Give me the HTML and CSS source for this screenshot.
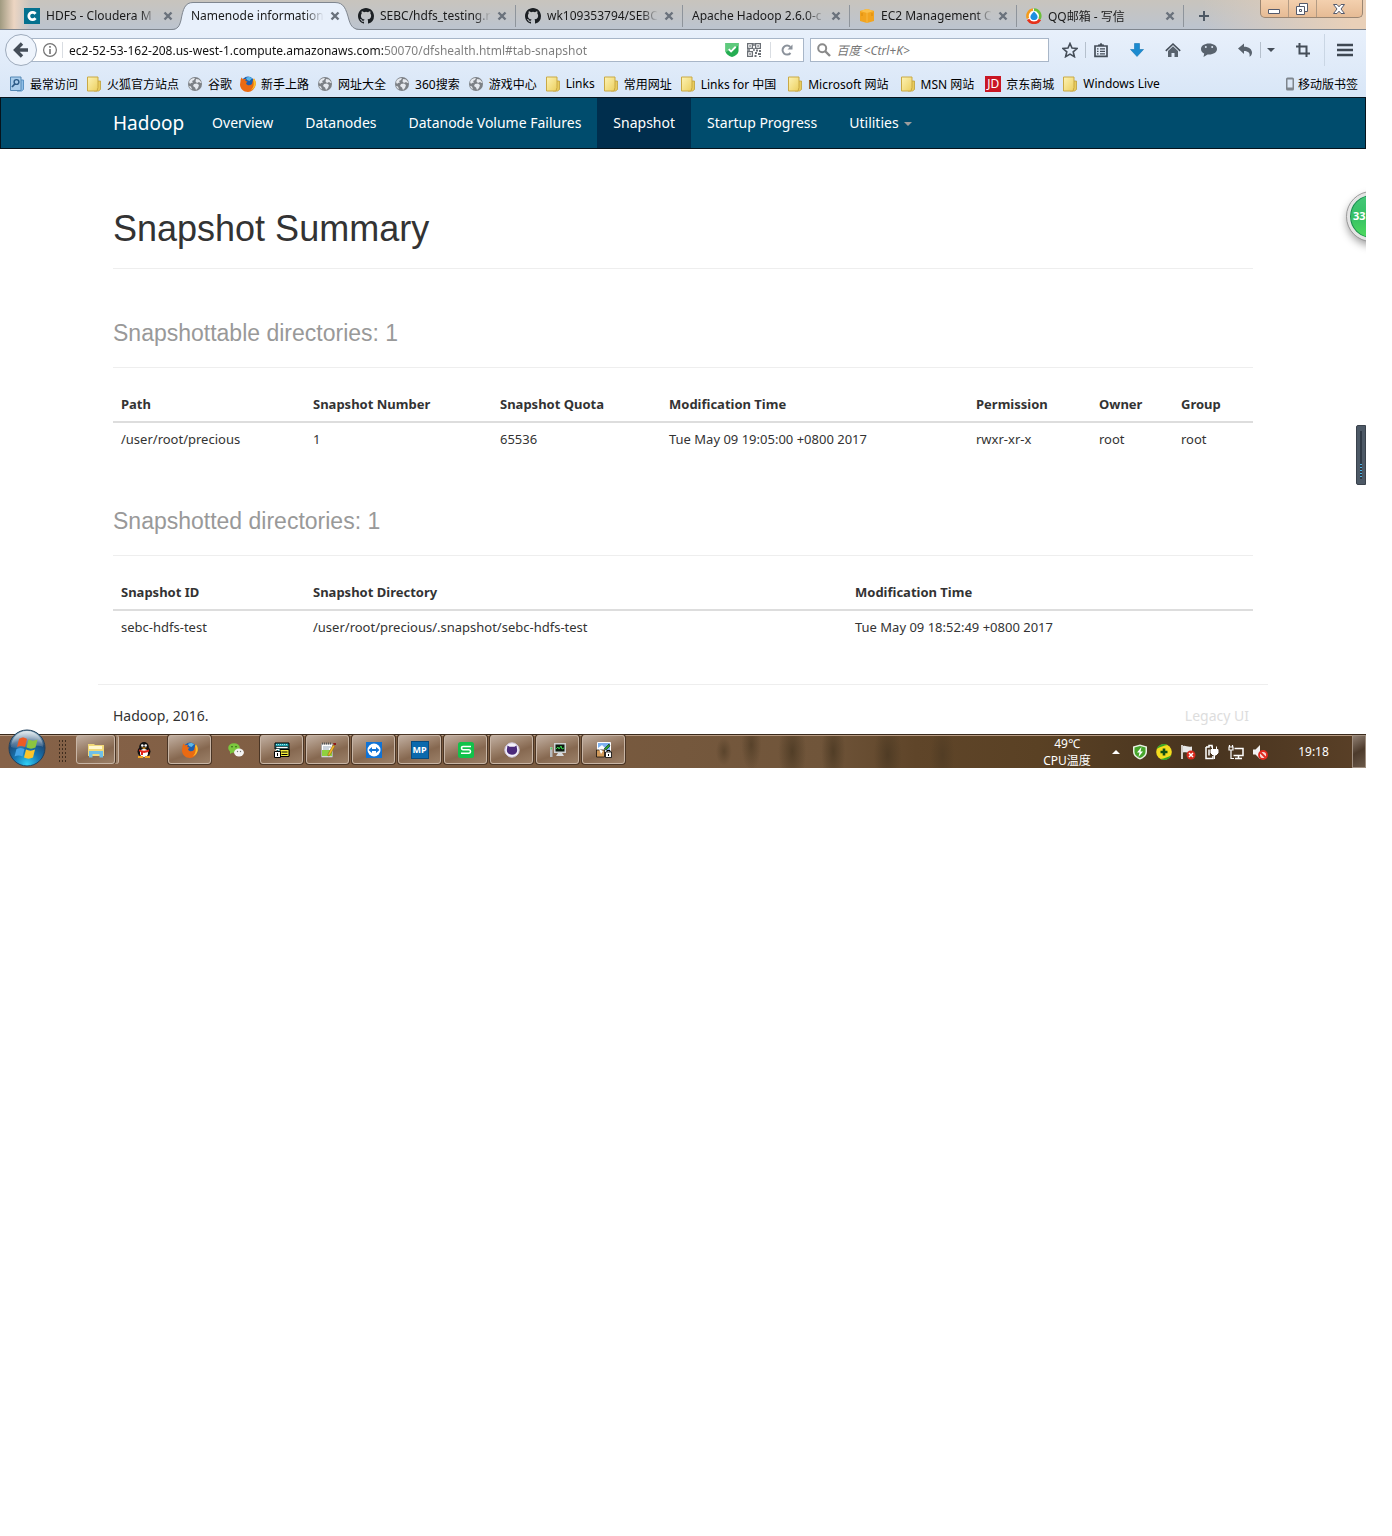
FILE: index.html
```html
<!DOCTYPE html>
<html lang="en">
<head>
<meta charset="utf-8">
<title>Namenode information</title>
<link rel="stylesheet" href="styles.css">
</head>
<body>
<svg class="defs" aria-hidden="true">
  <defs>
    <linearGradient id="g-folder" x1="0" y1="0" x2="1" y2="1"><stop offset="0" stop-color="#fdf3b5"/><stop offset="1" stop-color="#eccf5e"/></linearGradient>
    <radialGradient id="g-orb" cx=".5" cy=".95" r=".9"><stop offset="0" stop-color="#2fd0f5"/><stop offset=".4" stop-color="#1677b4"/><stop offset=".75" stop-color="#1c4a78"/><stop offset="1" stop-color="#87a9bd"/></radialGradient>
    <linearGradient id="g-gloss" x1="0" y1="0" x2="0" y2="1"><stop offset="0" stop-color="#fff" stop-opacity=".75"/><stop offset="1" stop-color="#fff" stop-opacity=".1"/></linearGradient>
  </defs>
  <symbol id="close" viewBox="0 0 10 10"><path d="M1.500 1.500l7 7M8.500 1.500l-7 7" stroke="#6a727c" stroke-width="2.400"/></symbol>
  <symbol id="folder" viewBox="0 0 16 16"><path d="M10 5h4.500v8.500l-2 1.500H8z" fill="#e8cb5c" stroke="#bf9f38" stroke-width=".8"/><path d="M1.500 1h10.500v10.500l-1 3.500H1.500z" fill="url(#g-folder)" stroke="#c9a945"/></symbol>
  <symbol id="globe" viewBox="0 0 16 16"><circle cx="8" cy="8" r="7" fill="#7d8186"/><path d="M2 6c1-3 3-4 6-4l-1 2-2 1 1 1.500-2 .5-1 1zM9 3l3 .5 2.500 3-1 .5L12 6l-2 1-1.500-1.500zM7 8l3-.5 2 1.500-1 3-2 2-1-2.500-2-1.500zM2 10l2 .5 1 3c-1.500-.7-2.500-2-3-3.500z" fill="#e6e9ee"/></symbol>
  <symbol id="github" viewBox="0 0 16 16"><path fill="#1b1f23" d="M8 0C3.580 0 0 3.580 0 8c0 3.540 2.290 6.530 5.470 7.590.4.070.55-.17.55-.38 0-.19-.01-.82-.01-1.490-2.010.37-2.530-.49-2.690-.94-.09-.23-.48-.94-.82-1.130-.28-.15-.68-.52-.01-.53.63-.01 1.080.58 1.230.82.72 1.210 1.870.87 2.330.66.070-.52.28-.87.51-1.070-1.780-.2-3.640-.89-3.640-3.950 0-.87.31-1.590.82-2.150-.08-.2-.36-1.020.08-2.120 0 0 .67-.21 2.200.82a7.400 7.400 0 0 1 4 0c1.530-1.040 2.200-.82 2.200-.82.44 1.100.16 1.920.08 2.120.51.56.82 1.270.82 2.150 0 3.070-1.870 3.750-3.650 3.950.29.25.54.73.54 1.480 0 1.070-.01 1.930-.01 2.200 0 .21.15.46.55.38A8.010 8.010 0 0 0 16 8c0-4.420-3.580-8-8-8z"/></symbol>
  <symbol id="firefox" viewBox="0 0 16 16"><circle cx="8" cy="7" r="6.500" fill="#1f5fae"/><path d="M6 2c2-1.500 5-1 6 .5L9.500 5 7 4z" fill="#5bb7e8"/><path d="M.5 5c0-1.500.5-2.500 1.200-3.500L3 3.500C4 3 5 3 6 3.300L5.200 5l2.300.5-1.500 1.800c1 2.500 4 2.700 6 .7L13 4l1-1.500c1.500 2 2 4 1.700 6C15 13 11.500 16 8 16 3.500 16 0 12.500 0 8.500z" fill="#ea6a12"/><path d="M14 2.500c1.500 2 2 4 1.700 6-.6 3-2.700 5-5 6C13.500 12 14.500 8 13 4z" fill="#fbc02a"/></symbol>
</svg>

<div class="desktop">
  <header class="browser">
    <div class="tabstrip">
      <div class="tab"><svg class="i16" viewBox="0 0 16 16"><path fill="#04718f" d="M0 0h16v16H0z"/><path d="M11.500 5.800A3.700 3.700 0 1 0 11.500 10.200" fill="none" stroke="#fff" stroke-width="2.800"/></svg><span class="tab-title">HDFS - Cloudera M</span><button class="tab-close" aria-label="Close tab"><svg viewBox="0 0 10 10"><use href="#close"/></svg></button></div>
      <div class="tab active"><svg class="tab-shape" viewBox="0 0 190 30" preserveAspectRatio="none"><path d="M0 30C7 30 8.500 26 10 20 12 9 14 2.500 22 2.500H164C173 2.500 175 9 178 20 180 27 183 30 190 30z" fill="#e8f0fb"/><path d="M0 29.500C7 29.500 8.500 26 10 20 12 9 14 2.500 22 2.500H164C173 2.500 175 9 178 20 180 27 183 29.500 190 29.500" fill="none" stroke="#7f868f"/></svg><span class="tab-title">Namenode information</span><button class="tab-close" aria-label="Close tab"><svg viewBox="0 0 10 10"><use href="#close"/></svg></button></div>
      <div class="tab sep"><svg class="i16"><use href="#github"/></svg><span class="tab-title">SEBC/hdfs_testing.r</span><button class="tab-close" aria-label="Close tab"><svg viewBox="0 0 10 10"><use href="#close"/></svg></button></div>
      <div class="tab sep"><svg class="i16"><use href="#github"/></svg><span class="tab-title">wk109353794/SEBC</span><button class="tab-close" aria-label="Close tab"><svg viewBox="0 0 10 10"><use href="#close"/></svg></button></div>
      <div class="tab sep"><span class="tab-title">Apache Hadoop 2.6.0-c</span><button class="tab-close" aria-label="Close tab"><svg viewBox="0 0 10 10"><use href="#close"/></svg></button></div>
      <div class="tab sep"><svg class="i16" viewBox="0 0 16 16"><path d="M1 3l7-2 7 2v10l-7 2-7-2z" fill="#f2a41f"/><path d="M1 3l7 2 7-2-7-2z" fill="#fbc04a"/><path d="M8 5v10" stroke="#f7b845"/><path d="M3 5v3M13 5v3" stroke="#d98a0c"/></svg><span class="tab-title">EC2 Management C</span><button class="tab-close" aria-label="Close tab"><svg viewBox="0 0 10 10"><use href="#close"/></svg></button></div>
      <div class="tab sep"><svg class="i16" viewBox="0 0 16 16"><circle cx="8" cy="8" r="7" fill="#fff"/><path d="M8 1.500A6.500 6.500 0 0 1 13.500 11" fill="none" stroke="#6cbf3a" stroke-width="2.600"/><path d="M2 10.500A6.500 6.500 0 0 1 7 1.500" fill="none" stroke="#f49b1b" stroke-width="2.600"/><path d="M2 11.500A7 7 0 0 0 14 11.500" fill="none" stroke="#e5321c" stroke-width="2.600"/><path d="M8 3.500c2.500 2.500 4 4 3.500 6.200-.4 1.500-1.800 2.300-3.500 2.300s-3.100-.8-3.500-2.300C4 7.500 5.500 6 8 3.500z" fill="#1e8fe0"/></svg><span class="tab-title">QQ邮箱 - 写信</span><button class="tab-close" aria-label="Close tab"><svg viewBox="0 0 10 10"><use href="#close"/></svg></button></div>
      <button class="new-tab" aria-label="New tab"><svg viewBox="0 0 12 12"><path d="M6 1v10M1 6h10" stroke="#4e5964" stroke-width="2"/></svg></button>
      <div class="win-controls">
        <button aria-label="Minimize"><svg width="14" height="12" viewBox="0 0 14 12"><path d="M1.500 6.500h11v4h-11z" fill="#fff" stroke="#545a6c"/></svg></button>
        <button aria-label="Restore"><svg width="14" height="12" viewBox="0 0 14 12"><path d="M4.500.5h8v8h-8z" fill="#fff" stroke="#545a6c"/><path d="M1.500 3.500h8v8h-8z" fill="#fff" stroke="#545a6c"/><path d="M4.500 6.500h2v2h-2z" fill="none" stroke="#545a6c"/></svg></button>
        <button aria-label="Close window"><svg width="14" height="12" viewBox="0 0 14 12"><path d="M1.500 1.500h3.500l2 2.300 2-2.300h3.500L9 6l3.500 4.500H9L7 8.200 5 10.500H1.500L5 6z" fill="#fff" stroke="#545a6c"/></svg></button>
      </div>
    </div>

    <div class="toolbar">
      <button class="back" aria-label="Back"><svg viewBox="0 0 16 16"><path d="M9 1.500L2.500 8 9 14.500M3 8h12" fill="none" stroke="#454e59" stroke-width="3.400"/></svg></button>
      <div class="urlbar">
        <svg class="i14" viewBox="0 0 14 14"><circle cx="7" cy="7" r="6.400" fill="none" stroke="#737373" stroke-width="1.200"/><path d="M7 6v5M7 3v1.800" stroke="#737373" stroke-width="1.600"/></svg>
        <span class="url-sep"></span>
        <input class="url" type="text" aria-label="Address" value="ec2-52-53-162-208.us-west-1.compute.amazonaws.com:50070/dfshealth.html#tab-snapshot">
        <svg class="i14 shield" viewBox="0 0 14 15"><path d="M0 0h14v8c0 3.500-3 5.500-7 7-4-1.500-7-3.500-7-7z" fill="#24ad52"/><path d="M0 0h14v3L0 10z" fill="#5fca7d"/><path d="M3.500 6.500L6 9l5-5" fill="none" stroke="#fff" stroke-width="2"/></svg>
        <svg class="i14 qr" viewBox="0 0 14 14"><path d="M.6.6h4.800v4.800H.6zM8.600.6h4.800v4.800H8.600zM.6 8.600h4.800v4.800H.6z" fill="none" stroke="#6a6f75" stroke-width="1.300"/><path d="M2.300 2.300h1.500v1.500H2.300zM10.300 2.300h1.500v1.500h-1.500zM2.300 10.300h1.500v1.500H2.300zM6.200 0h1.500v3H6.200zM6.200 5h1.500v3H6.200zM0 6.200h3v1.500H0zM9 6.500h2v2H9zM12 7h2v2h-2zM8 9h2v2H8zM11 10h3v2h-3zM7.500 12h2v2h-2zM12 13h2v1h-2z" fill="#6a6f75"/></svg>
        <span class="url-sep"></span>
        <button class="reload" aria-label="Reload"><svg viewBox="0 0 12 12"><path d="M9.500 9A4.500 4.500 0 1 1 9.300 3" fill="none" stroke="#8b929b" stroke-width="2"/><path d="M11.500.5v5h-5z" fill="#8b929b"/></svg></button>
      </div>
      <div class="searchbar">
        <svg class="i14" viewBox="0 0 14 14"><circle cx="5.200" cy="5.200" r="4" fill="none" stroke="#8a8a8a" stroke-width="2"/><path d="M8 8l5 5" stroke="#8a8a8a" stroke-width="2.400"/></svg>
        <input class="search" type="search" aria-label="Search" placeholder="百度 &lt;Ctrl+K&gt;">
      </div>
      <div class="tools">
        <button aria-label="Bookmark"><svg viewBox="0 0 16 16"><path d="M8 1.500l2 4.600 5 .4-3.800 3.300 1.200 4.900L8 12.100l-4.400 2.600 1.200-4.900L1 6.500l5-.4z" fill="none" stroke="#454e59" stroke-width="1.600"/></svg></button>
        <span class="tool-sep"></span>
        <button aria-label="Bookmarks menu"><svg viewBox="0 0 16 16"><path d="M2 4h12v10.300H2z" fill="none" stroke="#454e59" stroke-width="1.700"/><path d="M5 4V2.500h1.500L8 .8l1.500 1.700H11V4z" fill="#454e59"/><path d="M4 6.800h1.500M7 6.800h5M4 9.300h1.500M7 9.300h5M4 11.800h1.500M7 11.800h5" stroke="#454e59" stroke-width="1.200"/></svg></button>
        <button aria-label="Downloads"><svg viewBox="0 0 16 16"><path d="M5.500 1.500h5v6h4L8 14.500 1.500 7.500h4z" fill="#1b8bd0" stroke="#1273b2" stroke-width=".6"/></svg></button>
        <button aria-label="Home"><svg viewBox="0 0 16 16"><path d="M.8 8.800L8 2l7.200 6.800" fill="none" stroke="#454e59" stroke-width="1.600"/><path d="M3 8.900L8 4.200l5 4.700V15H9.500v-4h-3v4H3z" fill="#59636e"/></svg></button>
        <button aria-label="Chat"><svg viewBox="0 0 16 16"><path d="M8 1.500c4.500 0 8 2.300 8 5.500s-3.500 5.500-8 5.500l-1.500-.1L2.500 15l.7-3.400C1.200 10.600 0 9 0 7c0-3.200 3.500-5.500 8-5.500z" fill="#59636e"/><circle cx="4.800" cy="5" r="1" fill="#dfe9f6"/><circle cx="11.200" cy="5" r="1" fill="#dfe9f6"/></svg></button>
        <button aria-label="Undo"><svg viewBox="0 0 16 16"><path d="M1 6.500L7 1.500v3.200c5 0 8 2.600 8 6 0 1.500-.8 3-2.500 4 .8-3.500-1-5.700-5.500-5.700v3z" fill="#59636e"/></svg></button>
        <span class="tool-sep"></span>
        <button class="narrow" aria-label="Undo list"><svg viewBox="0 0 16 16"><path d="M4 6h8l-4 4z" fill="#454e59"/></svg></button>
        <button class="crop" aria-label="Screenshot"><svg viewBox="0 0 16 16"><path d="M4.500 1v10.500H15M1 4.500h10.500V15" fill="none" stroke="#454e59" stroke-width="2"/></svg></button>
        <span class="menu-sep"></span>
        <button aria-label="Menu"><svg viewBox="0 0 16 16"><path d="M0 3h16M0 8h16M0 13h16" stroke="#3f4853" stroke-width="2.600"/></svg></button>
      </div>
    </div>

    <nav class="bookmarks" aria-label="Bookmarks">
      <a href="#"><svg class="i16" viewBox="0 0 16 16"><path d="M10 4h4.500v9.500l-2 1.500H8z" fill="#8dbde6" stroke="#5b93c4"/><path d="M1.500 1h10.500v13.500H1.500z" fill="#a9cdec" stroke="#5488b5"/><circle cx="7.500" cy="6" r="2.400" fill="none" stroke="#2c5c88" stroke-width="1.400"/><path d="M5.800 8L3 11" stroke="#2c5c88" stroke-width="1.800"/></svg>最常访问</a>
      <a href="#"><svg class="i16"><use href="#folder"/></svg>火狐官方站点</a>
      <a href="#"><svg class="i16"><use href="#globe"/></svg>谷歌</a>
      <a href="#"><svg class="i16"><use href="#firefox"/></svg>新手上路</a>
      <a href="#"><svg class="i16"><use href="#globe"/></svg>网址大全</a>
      <a href="#"><svg class="i16"><use href="#globe"/></svg>360搜索</a>
      <a href="#"><svg class="i16"><use href="#globe"/></svg>游戏中心</a>
      <a href="#"><svg class="i16"><use href="#folder"/></svg>Links</a>
      <a href="#"><svg class="i16"><use href="#folder"/></svg>常用网址</a>
      <a href="#" class="mixed"><svg class="i16"><use href="#folder"/></svg>Links for 中国</a>
      <a href="#" class="mixed"><svg class="i16"><use href="#folder"/></svg>Microsoft 网站</a>
      <a href="#" class="mixed"><svg class="i16"><use href="#folder"/></svg>MSN 网站</a>
      <a href="#"><span class="jd">JD</span>京东商城</a>
      <a href="#"><svg class="i16"><use href="#folder"/></svg>Windows Live</a>
      <a href="#" class="mobile"><svg width="10" height="14" viewBox="0 0 10 14"><rect x="1" y=".5" width="8" height="13" rx="1.500" fill="#7e858d"/><path d="M2.500 2.500h5v8h-5z" fill="#dbe7f6"/></svg>移动版书签</a>
    </nav>
  </header>

  <nav class="navbar">
    <div class="container">
      <a class="brand" href="#">Hadoop</a>
      <a href="#">Overview</a>
      <a href="#">Datanodes</a>
      <a href="#">Datanode Volume Failures</a>
      <a href="#" class="current">Snapshot</a>
      <a href="#">Startup Progress</a>
      <a href="#">Utilities <span class="caret"></span></a>
    </div>
  </nav>

  <main class="container page">
    <h1>Snapshot Summary</h1>
    <h2>Snapshottable directories: 1</h2>
    <table>
      <colgroup><col class="w192"><col class="w187"><col class="w169"><col class="w307"><col class="w123"><col class="w82"><col class="w80"></colgroup>
      <thead><tr><th>Path</th><th>Snapshot Number</th><th>Snapshot Quota</th><th>Modification Time</th><th>Permission</th><th>Owner</th><th>Group</th></tr></thead>
      <tbody><tr><td>/user/root/precious</td><td>1</td><td>65536</td><td>Tue May 09 19:05:00 +0800 2017</td><td>rwxr-xr-x</td><td>root</td><td>root</td></tr></tbody>
    </table>
    <h2>Snapshotted directories: 1</h2>
    <table>
      <colgroup><col class="w192"><col class="w542"><col class="w406"></colgroup>
      <thead><tr><th>Snapshot ID</th><th>Snapshot Directory</th><th>Modification Time</th></tr></thead>
      <tbody><tr><td>sebc-hdfs-test</td><td>/user/root/precious/.snapshot/sebc-hdfs-test</td><td>Tue May 09 18:52:49 +0800 2017</td></tr></tbody>
    </table>
  </main>
  <footer class="container foot"><span>Hadoop, 2016.</span><a href="#">Legacy UI</a></footer>

  <div class="ball">33</div>
  <div class="meter"><span></span></div>

  <div class="taskbar">
    <button class="start" aria-label="Start"><svg viewBox="0 0 38 38"><circle cx="19" cy="19" r="18" fill="url(#g-orb)" stroke="#1f3f5c"/><path d="M3 18a16 16 0 0 1 32 0c-8-4-22 4-32 0z" fill="url(#g-gloss)"/><path d="M11 10c3-2 5-2 8 0l-2 8c-3-1.500-5-1.500-8 0z" fill="#ec5b26"/><path d="M20.500 10.500c3 1.500 6 1.500 9 0l-2 8c-3 1.500-6 1.500-9 0z" fill="#8cc540"/><path d="M8.500 20c3-1.500 5-1.500 8 0l-2 7.500c-3-1.500-5-1.500-8 0z" fill="#45a3e6"/><path d="M18 20.500c3 1.500 6 1.500 9 0l-2 8c-3 1.500-6 1.500-9 0z" fill="#fcc52c"/></svg></button>
    <span class="grip"></span>
    <div class="tasks">
      <button class="task stack" aria-label="Explorer"><svg viewBox="0 0 16 16"><path d="M0 2h6l1 1h9v11H0z" fill="#f0d878"/><path d="M1 4h13v3H1z" fill="#fff7cf"/><path d="M1 9h14v6.500h-3.500V12h-7v3.500H1z" fill="#6fc0e8"/></svg></button>
      <button class="task flat" aria-label="QQ"><svg viewBox="0 0 16 16"><ellipse cx="8" cy="9.500" rx="6.500" ry="5.500" fill="#111"/><circle cx="8" cy="4.800" r="4.800" fill="#111"/><ellipse cx="8" cy="11" rx="4" ry="4" fill="#fff"/><circle cx="6.300" cy="3.500" r="1.300" fill="#fff"/><circle cx="9.700" cy="3.500" r="1.300" fill="#fff"/><path d="M5 5.500h6L8 7z" fill="#f5a623"/><path d="M3 7.500c3 1.500 7 1.500 10 0v2c-3 1.500-5 1.500-6 1.300V13H5v-3l-2-.7z" fill="#e2231a"/><path d="M2 14h5v2H2zM9 14h5v2H9z" fill="#f5a623"/></svg></button>
      <button class="task" aria-label="Firefox"><svg><use href="#firefox"/></svg></button>
      <button class="task flat" aria-label="WeChat"><svg viewBox="0 0 16 16"><ellipse cx="6" cy="6" rx="5.800" ry="4.800" fill="#7bc83e"/><circle cx="4" cy="4.700" r=".8" fill="#2b5a12"/><circle cx="8" cy="4.700" r=".8" fill="#2b5a12"/><ellipse cx="11" cy="10.500" rx="4.900" ry="4" fill="#f4f4f4"/><path d="M2 9v3l3-2z" fill="#7bc83e"/><circle cx="9.500" cy="9.500" r=".7" fill="#777"/><circle cx="12.500" cy="9.500" r=".7" fill="#777"/></svg></button>
      <button class="task" aria-label="Secure terminal"><svg viewBox="0 0 16 16"><path d="M1 1h14v13H3V7H1z" fill="#1aa3b0" stroke="#000"/><path d="M2 2.500h12" stroke="#9fe4ea" stroke-dasharray="1 1"/><path d="M2 4.500h12v2H2z" fill="#fff" stroke="#000" stroke-width=".6"/><path d="M6 7.500h9v7H6z" fill="#f5ee3a" stroke="#000"/><path d="M7.500 10h6M7.500 12.500h6" stroke="#000"/><path d="M.5 9.500h6v6h-6z" fill="#fff" stroke="#000"/><path d="M2 9V7.500h3V9" fill="none" stroke="#fff"/><path d="M3.500 11v3" stroke="#000"/></svg></button>
      <button class="task" aria-label="Notepad"><svg viewBox="0 0 16 16"><path d="M1.500 2h11v13h-11z" fill="#fff" stroke="#aaa"/><path d="M2 8h10v6H2z" fill="#8fd13f"/><path d="M2 1.500h10" stroke="#555" stroke-width="2" stroke-dasharray="1 1"/><path d="M3 5h8M3 7h6" stroke="#9ab"/><path d="M8 12l5-9 2 1-5 9-2 1z" fill="#f3b52a" stroke="#7a5a10" stroke-width=".5"/><path d="M13 1h3v2h-2z" fill="#8e1b1b"/></svg></button>
      <button class="task" aria-label="TeamViewer"><svg viewBox="0 0 16 16"><path fill="#1073d6" d="M0 0h16v16H0z"/><circle cx="8" cy="8" r="6.500" fill="#fff"/><path d="M2.500 8L6 5v2h4V5l3.500 3L10 11V9H6v2z" fill="#1073d6"/></svg></button>
      <button class="task" aria-label="MP"><span class="mp">MP</span></button>
      <button class="task" aria-label="WPS Spreadsheets"><svg viewBox="0 0 16 16"><rect width="16" height="16" rx="2.500" fill="#12c24a"/><path d="M13 4.500H5Q3.500 4.500 3.500 6T5 7.800h6q1.500 0 1.500 1.700T11 11.300H3" fill="none" stroke="#fff" stroke-width="1.600"/></svg></button>
      <button class="task" aria-label="GitHub Desktop"><svg viewBox="0 0 16 16"><circle cx="8" cy="8" r="7.200" fill="#f4f1fa" stroke="#cfc6dd"/><path d="M3.500 3.500l2 1.200h5l2-1.200.7 4.500c0 3-2 4.700-5.200 4.700S2.800 11 2.800 8z" fill="#4b2a7b"/></svg></button>
      <button class="task" aria-label="Monitor"><svg viewBox="0 0 16 16"><path d="M4 1h12v10H4z" fill="#cfd2d4"/><path d="M5.500 2.500h9v7h-9z" fill="#0b1a0e"/><path d="M6 7l2-2 1 2 2-3 1 3 2-1" fill="none" stroke="#34d34a"/><path d="M8 11h4l2 3H6z" fill="#d9dcde"/><path d="M0 5h2.500v10H0z" fill="#b9bcbe"/><path d="M.7 6.500h1" stroke="#2bdc3b" stroke-width="2"/></svg></button>
      <button class="task" aria-label="Remote pictures"><svg viewBox="0 0 16 16"><path d="M1.500.5h13v9h-13z" fill="#7fb2f0" stroke="#fff"/><path d="M2 6l4-3 4 4v2H2z" fill="#fff"/><path d="M8 7l5-5 1 2-4 4z" fill="#27a52c" stroke="#000" stroke-width=".5"/><path d="M.5 8h8v7h-8z" fill="#d29a5a" stroke="#000" stroke-width=".7"/><path d="M3 7l4 2-2 3z" fill="#fff"/><path d="M9.500 10h6v5.500h-6z" fill="#fff" stroke="#000" stroke-width=".8"/><path d="M11 10V8.500h3V10M12.500 12v2" fill="none" stroke="#000"/></svg></button>
    </div>
    <div class="cpu"><span>49℃</span><span>CPU温度</span></div>
    <div class="tray">
      <svg viewBox="0 0 16 16"><path d="M4 10l4-4 4 4z" fill="#fff"/></svg>
      <svg viewBox="0 0 16 16"><path d="M8 .5l7 2v5c0 4-3 6.500-7 8-4-1.500-7-4-7-8v-5z" fill="#e9f1e4"/><path d="M8 2l5.500 1.600v4C13.500 10.700 11 13 8 14c-3-1-5.500-3.300-5.500-6.400v-4z" fill="#47a52c"/><path d="M9.500 3L5 8.500h2.500L6.500 13 11 7.500H8.500z" fill="#fff"/></svg>
      <svg viewBox="0 0 16 16"><circle cx="8" cy="8" r="7.800" fill="#f4dc1e"/><path d="M.5 5a7.800 7.800 0 0 1 11-4C8 1.500 4 3 .5 5zM15.500 11a7.800 7.800 0 0 1-11 4c4-.5 8-2 11-4z" fill="#35a528"/><path d="M8 4.500v7M4.500 8h7" stroke="#114d12" stroke-width="2.600"/></svg>
      <svg viewBox="0 0 16 16"><path d="M2 1v14" stroke="#fff" stroke-width="1.500"/><path d="M3 2c3-1 4 1.500 9 .5v6C8 9.500 6 7.500 3 8.500z" fill="#e8e8e8"/><circle cx="11" cy="11" r="4.500" fill="#d92a1c"/><path d="M9 9l4 4M13 9l-4 4" stroke="#fff" stroke-width="1.500"/></svg>
      <svg viewBox="0 0 16 16"><path d="M2 3h3V1.500h3V3h1M2 3v11.500h7V12" fill="none" stroke="#fff" stroke-width="1.500"/><path d="M5 5.500v6" stroke="#fff" stroke-width="1.500"/><path d="M7 5.500h7V9l-2 2H9L7 9zM8.500 2.500V5M12.500 2.500V5M10.500 11v4" fill="#fff" stroke="#fff"/></svg>
      <svg viewBox="0 0 16 16"><path d="M6.500 4.500h8.500v7H5.500M10.500 12v2.500M7 14.500h7" fill="none" stroke="#fff" stroke-width="1.500"/><path d="M1 3h4v3H1zM1.500 1v2M4.500 1v2M3 6v8.500h3" fill="none" stroke="#fff" stroke-width="1.200"/></svg>
      <svg viewBox="0 0 16 16"><path d="M1 5.500h2.500L8 1v14l-4.500-4.500H1z" fill="#f2f2f2"/><circle cx="11" cy="11" r="4" fill="#f6d9d5" stroke="#e12a1f" stroke-width="1.800"/><path d="M8.500 8.500l5 5" stroke="#e12a1f" stroke-width="1.800"/></svg>
    </div>
    <div class="clock">19:18</div>
    <button class="show-desktop" aria-label="Show desktop"></button>
  </div>
</div>
</body>
</html>
```
FILE: styles.css
```css
* { box-sizing: border-box; }
body {
  margin: 0;
  padding-right: 26px;
  background: #fff;
  color: #333;
  font-family: "Noto Sans", "Noto Sans CJK SC", sans-serif;
  font-size: 12px;
}
button { border: 0; padding: 0; background: none; font: inherit; display: flex; align-items: center; justify-content: center; }
a { color: inherit; text-decoration: none; }
input { border: 0; padding: 0; background: none; font: inherit; outline: 0; min-width: 0; }
svg { display: block; flex: none; }
.defs { position: absolute; width: 0; height: 0; }
.i16 { width: 16px; height: 16px; }
.i14 { width: 14px; height: 14px; }
.desktop { position: relative; overflow: hidden; }

/* Tabs */
.browser { color: #1a1a1a; background: linear-gradient(#e8f0fb 30px, #d8e6f7 97px); }
.tabstrip {
  display: flex;
  height: 30px;
  padding-left: 15px;
  border-bottom: 1px solid #7f868f;
  background: linear-gradient(90deg, #a09a80 0, #ecd5c2 14px, transparent 30px), linear-gradient(90deg, transparent 88%, #e9d0b8 99%), linear-gradient(#c8c4bd, #bcc4cf);
}
.tab { position: relative; display: flex; align-items: center; gap: 6px; flex: 0 1 167px; padding: 2px 9px 0; min-width: 0; }
.tab.sep::after { content: ""; position: absolute; right: 0; top: 5px; width: 1px; height: 22px; background: #8e949b; }
.tab-title { position: relative; flex: 1; overflow: hidden; white-space: nowrap; mask-image: linear-gradient(90deg, #000 85%, transparent); }
.tab-close { position: relative; width: 10px; height: 10px; }
.tab-close svg { width: 10px; height: 10px; }
.tab-shape { position: absolute; left: -11px; top: 0; width: 190px; height: 30px; }
.new-tab { width: 40px; padding-top: 2px; }
.new-tab svg { width: 12px; height: 12px; }
.win-controls {
  display: flex;
  width: 103px;
  height: 18px;
  margin: 0 3px 0 auto;
  border: 1px solid #9b8672;
  border-top: 0;
  border-radius: 0 0 5px 5px;
  background: linear-gradient(#f3d0ae, #e6bb95);
}
.win-controls button { flex: 28; }
.win-controls button + button { border-left: 1px solid #b39b84; }
.win-controls button:last-child { flex: 47; }

/* Toolbar */
.toolbar { display: flex; align-items: center; height: 40px; padding: 0 13px 0 5px; }
.back { position: relative; width: 32px; height: 32px; border: 1px solid #9eabbc; border-radius: 50%; background: #eef4fc; }
.back svg { width: 16px; height: 16px; }
.urlbar, .searchbar { display: flex; align-items: center; height: 24px; border: 1px solid #a8b6c8; background: #fff; }
.urlbar { flex: 781; margin-left: -15px; padding: 0 10px 0 20px; }
.searchbar { flex: 240; margin-left: 6px; padding-left: 6px; gap: 5px; }
.url-sep { width: 1px; height: 16px; margin: 0 6px 0 5px; background: #d9dde2; }
.url {
  flex: 1;
  color: transparent;
  background: linear-gradient(90deg, #111 315px, #7c7c7c 315px);
  background-clip: text;
}
.qr { margin: 0 4px 0 8px; }
.reload { width: 12px; margin-left: 4px; }
.reload svg { width: 12px; height: 12px; }
.search { flex: 1; }
.search::placeholder { color: #777; font-style: italic; opacity: 1; }
.tools { display: flex; align-items: center; margin-left: 13px; }
.tools button { width: 16px; margin-right: 20px; }
.tools svg { width: 16px; height: 16px; }
.tools button:first-child { margin-right: 7px; }
.tools .tool-sep { width: 1px; height: 16px; background: #b5c0cd; margin-right: 7px; }
.tools button:has(+ .tool-sep) { margin-right: 7px; }
.tools .narrow { margin: 0 16px 0 -5px; }
.tools .crop { margin-right: 13px; }
.menu-sep { width: 1px; height: 32px; margin-right: 12px; background: #cad6e4; }
.tools button:last-child { margin-right: 0; }

/* Bookmarks */
.bookmarks { display: flex; align-items: center; gap: 8px; height: 27px; padding: 0 8px 0 9px; color: #000; white-space: nowrap; }
.bookmarks a { display: flex; align-items: center; gap: 5px; }
.bookmarks .mixed { padding-right: 3px; }
.bookmarks .mobile { margin-left: auto; gap: 3px; }
.jd { width: 16px; height: 16px; background: #c91623; color: #fff; line-height: 16px; text-align: center; }

/* Hadoop page */
.container { max-width: 1170px; margin: 0 auto; padding: 0 15px; }
.navbar { border: 1px solid #06131c; background: #004c6d; color: #fff; font-size: 14px; }
.navbar .container { display: flex; }
.navbar a { padding: 0 16px; line-height: 50px; white-space: nowrap; }
.navbar .brand { padding: 0 12px 0 0; font-size: 19px; }
.navbar .current { background: #002e4d; }
.caret { display: inline-block; margin-left: 2px; border: 4px solid transparent; border-top-color: #9d9d9d; border-bottom: 0; vertical-align: middle; }
.page { padding-top: 60px; padding-bottom: 39px; font-size: 13px; }
h1, h2 { margin: 0 0 20px; border-bottom: 1px solid #eee; font-family: "Liberation Sans", Arial, sans-serif; font-weight: 400; }
h1 { padding-bottom: 19px; font-size: 36px; line-height: 40px; }
h2 { margin-top: 40px; padding-bottom: 10px; font-size: 23px; line-height: 48px; color: #999; }
table { width: 100%; table-layout: fixed; border-collapse: separate; border-spacing: 0; }
th, td { padding: 7px 8px 9px; line-height: 18px; text-align: left; white-space: nowrap; }
th { padding-bottom: 8px; border-bottom: 2px solid #ddd; }
.w192 { width: 192px; }
.w187 { width: 187px; }
.w169 { width: 169px; }
.w307 { width: 307px; }
.w123 { width: 123px; }
.w82 { width: 82px; }
.w80 { width: 80px; }
.w542 { width: 542px; }
.w406 { width: 406px; }
.foot { display: flex; justify-content: space-between; padding-top: 20px; padding-bottom: 8px; padding-right: 19px; border-top: 1px solid #eee; font-size: 14px; line-height: 21px; }
.foot a { color: #ddd; }

/* Desktop gadgets that float over the window */
.ball {
  position: absolute;
  top: 192px;
  right: -30px;
  width: 49px;
  height: 49px;
  padding-left: 3px;
  border: 3px solid #e4e4e4;
  border-radius: 50%;
  outline: 1px solid #999;
  background: linear-gradient(#45c878, #35c065 50%, #50dc5c);
  box-shadow: inset 0 0 0 1px #1f8a55, 0 4px 8px #0006;
  color: #fff;
  font-size: 11px;
  font-weight: 700;
  line-height: 41px;
}
.meter { position: absolute; top: 425px; right: 0; width: 10px; height: 60px; padding: 5px 3px; border: 1px solid #3a424c; border-radius: 2px 0 0 2px; background: #4d5966; }
.meter span { display: block; height: 100%; background: repeating-linear-gradient(transparent 0 1px, #2f3945 1px 3px), linear-gradient(#2f3945 66%, #4db4e6 66%); }

/* Taskbar */
.taskbar {
  position: relative;
  display: flex;
  align-items: center;
  height: 34px;
  padding-left: 8px;
  border-top: 1px solid #3a2a1c;
  box-shadow: inset 0 1px #b89c84;
  color: #fff;
  background:
    radial-gradient(ellipse 8px 14px at 53% 50%, #4a382299, transparent),
    radial-gradient(ellipse 10px 26px at 55% 30%, #4a3822aa, transparent),
    radial-gradient(ellipse 14px 34px at 58% 50%, #4a3822cc, transparent),
    radial-gradient(ellipse 12px 34px at 61% 50%, #4a3822cc, transparent),
    radial-gradient(ellipse 14px 34px at 65% 60%, #4a3822cc, transparent),
    radial-gradient(ellipse 12px 30px at 69% 60%, #4a382299, transparent),
    linear-gradient(90deg, #866248, #7a5b40 40%, #70553a 60%, #5f4529 67%, #5a4124 76%, #48341f 88%, #5a4027);
}
.start { width: 38px; height: 38px; margin: -8px 12px 0 0; }
.start svg { width: 38px; height: 38px; }
.grip { width: 9px; height: 25px; margin-right: 9px; background: radial-gradient(circle, #3f2c1d 1px, transparent 1px) 0 0 / 3px 4px; }
.tasks { display: flex; gap: 3px; align-self: stretch; }
.task { width: 43px; height: 29px; border: 1px solid #c8b5a5; border-radius: 3px; background: linear-gradient(160deg, #c0aea0, #9a7f69 40%, #866850 60%, #9b8068); box-shadow: 0 0 0 1px #4a3525; }
.task svg { width: 16px; height: 16px; }
.task.flat { border-color: transparent; background: none; box-shadow: none; }
.task.stack { width: 39px; margin-right: 4px; box-shadow: 1px 0 0 0 #4a3525, 3px 0 0 0 #9b8068, 4px 0 0 0 #c8b5a5; }
.mp { width: 16px; height: 16px; background: #0b69ad; outline: 1px solid #084b7e; font-size: 9px; font-weight: 700; line-height: 16px; color: #fff; }
.cpu { display: flex; flex-direction: column; align-items: center; width: 50px; margin-left: auto; line-height: 17px; }
.tray { display: flex; gap: 8px; margin-left: 16px; }
.tray svg { width: 16px; height: 16px; }
.clock { width: 84px; padding-left: 7px; text-align: center; }
.show-desktop { width: 14px; align-self: stretch; border: 1px solid #a08f80; background: linear-gradient(150deg, #8f7f72, #4d3b2c 50%, #6a5848); }
```
